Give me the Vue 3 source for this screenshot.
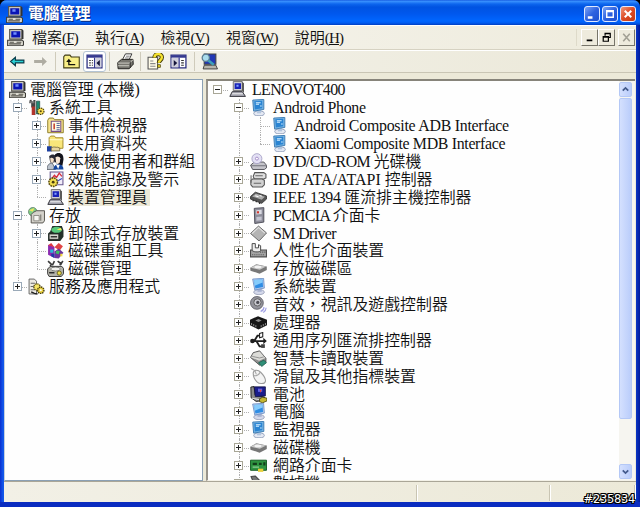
<template>
  <div class="window">
    <!-- Icon sheet -->
    <svg class="sheet" width="0" height="0">
      <symbol id="i-pc" viewBox="0 0 16 16">
        <path d="M2.500 .5h11.500v9H2.500z" fill="#c9c8bf" stroke="#55534c" />
        <path d="M4 2h8.500v6H4z" fill="#0a14b4" />
        <path d="M6 3h3v2.500H6z" fill="#6f8cff" />
        <path d="M14 .5l1.500 1v8L14 9.500z" fill="#333" />
        <path d="M.6 10.500h13.400l1.500 1v3.500l-1 .8H.6z" fill="#dedcd2" stroke="#3b3a36" />
        <path d="M2.500 12.500h4M9 12.500h4.500M2 14h11" stroke="#55534c" />
      </symbol>
      <symbol id="i-dev" viewBox="0 0 16 16">
        <path d="M4 .5h8.500v8.500H4z" fill="#d0d0d4" stroke="#666" stroke-width=".8" />
        <path d="M5.300 2h6v5.500h-6z" fill="#1822b8" />
        <path d="M7 3.500h2v2H7z" fill="#7fa0ff" />
        <path d="M12.500 1l1.500 1v9l-1.500-1.500z" fill="#444" />
        <path d="M3 10h9.500l3 4.500H.8z" fill="#a9a9b4" stroke="#33333a" stroke-width=".9" />
        <path d="M3 12h10" stroke="#eee" />
      </symbol>
      <symbol id="i-tools" viewBox="0 0 16 16">
        <path d="M2 1l2 3v4M6 1v14" stroke="#444" stroke-width="2" fill="none" />
        <path d="M3.500 7h3v8h-3z" fill="#b3342b" />
        <path d="M8 2h3v12H8z" fill="#1c8a72" stroke="#183e38" stroke-width=".6" />
        <path d="M1 3h5" stroke="#777" stroke-width="2" />
        <circle cx="12" cy="11.500" r="3" fill="#ffe254" stroke="#4c4310" stroke-dasharray="1.300 .7" stroke-width="1.200" />
        <circle cx="12" cy="11.500" r="1" fill="#554a13" />
      </symbol>
      <symbol id="i-event" viewBox="0 0 16 16">
        <path d="M.7 3V14.800h14.600V2.500H7L6 1H2z" fill="#f7e48c" stroke="#8a7b28" stroke-width=".9" />
        <path d="M4 4h9v9.500H4z" fill="#fffbe5" stroke="#77508a" />
        <path d="M6 6h1.500v5.500H6z" fill="#c7442f" />
        <path d="M9 6h3M9 8h3M9 10h3M9 12h3" stroke="#4a5a98" stroke-width=".9" />
      </symbol>
      <symbol id="i-share" viewBox="0 0 16 16">
        <path d="M2 12.500V2.500L3.500 1H7l1.200 1.600H15v9.900z" fill="#f9e67a" stroke="#a48c2a" stroke-width=".9" />
        <path d="M2.500 4.500h12" stroke="#fffbd0" />
        <path d="M0 10.500h4.500v5H0z" fill="#1c3fa0" />
        <path d="M4 12c3-1.500 4 0 6-.5l2 .8v2.700H4z" fill="#e8d6a0" stroke="#665a34" stroke-width=".7" />
      </symbol>
      <symbol id="i-users" viewBox="0 0 16 16">
        <path d="M6 7c0-5 2-7 5-7s4.500 2 4.500 6l-1 6-4-1z" fill="#14141c" />
        <path d="M2 3c2-2 5-2 6 0l-1 6H3z" fill="#2a2a34" />
        <path d="M3 5c2-1 3 0 3.500 1L6 9H3.500z" fill="#f2ddc6" />
        <path d="M8 4c2-1.300 4-.5 4.500 1L12 9l-2 1.500L8.500 9z" fill="#f8e6d3" />
        <path d="M0 15.500c0-4 2-6 5-6l3 6z" fill="#bcc3cd" stroke="#353d49" stroke-width=".6" />
        <path d="M6 15.500c0-3 2-5 5-5s4.500 2 4.500 5z" fill="#14469e" />
        <path d="M8.500 11l2 4 1.500-4" fill="#fff" />
      </symbol>
      <symbol id="i-perf" viewBox="0 0 16 16">
        <path d="M3 1h12v12H3z" fill="#f2edf8" stroke="#67578e" />
        <path d="M4 8l3-4 2 2 2.500-4L14 5" stroke="#d52c3c" fill="none" stroke-width="1.200" />
        <path d="M9 10l5-3" stroke="#2f44bc" />
        <circle cx="5.800" cy="10.500" r="4" fill="#f4e052" stroke="#5a4e12" stroke-dasharray="1.600 .8" stroke-width="1.500" />
        <circle cx="5.800" cy="10.500" r="1.300" fill="#463c0c" />
      </symbol>
      <symbol id="i-store" viewBox="0 0 16 16">
        <circle cx="4.500" cy="4.500" r="4" fill="#7fd08a" stroke="#51705a" stroke-width=".7" />
        <path d="M1 3l3.500 1.500L6 1z" fill="#f3e45e" />
        <path d="M5 5l3-1.500h7.500V13l-1.500 2H3V7z" fill="#d4d2cb" stroke="#55534d" stroke-width=".9" />
        <path d="M5.500 8h5v5h-5z" fill="#f7f6f2" stroke="#77756e" stroke-width=".7" />
        <path d="M12 7v6" stroke="#77756e" />
      </symbol>
      <symbol id="i-remov" viewBox="0 0 16 16">
        <path d="M3 6l2-5h9l1.500 4v6l-3 4H1V8z" fill="#23302a" />
        <ellipse cx="9" cy="4.500" rx="5" ry="2.800" fill="#58c87b" />
        <path d="M9 4.500l4-2 .8 2.500z" fill="#f6ea5c" />
        <path d="M2 8.500h9v5H2z" fill="#d5d5cf" stroke="#222" stroke-width=".7" />
        <path d="M3.500 11h6" stroke="#333" stroke-width="1.400" />
      </symbol>
      <symbol id="i-defrag" viewBox="0 0 16 16">
        <path d="M1 2.500l6 2v10.500l-6-3z" fill="#8a2bb0" />
        <path d="M1 3l3-2 3 4z" fill="#dd3742" />
        <path d="M3 7h3v3H3z" fill="#28b9d8" />
        <path d="M7 5l4-4 4 3-3 4z" fill="#e04444" />
        <path d="M7 9l4-3 4.500 4-4.500 5.500-4-.5z" fill="#6b34a0" />
        <path d="M9 8l3 .5-1 3-3-1z" fill="#3cc261" />
        <path d="M12.500 11h2v2.500h-2z" fill="#f3d93d" />
        <path d="M4 11h3v4L4 13.500z" fill="#1d3aa6" />
      </symbol>
      <symbol id="i-dmgmt" viewBox="0 0 16 16">
        <path d="M1 1l3 3-1 2M7 1L5 5M10 1l4 3M15 1l-3 4" stroke="#3a3a3a" stroke-width="1.500" fill="none" />
        <path d="M3 6h11l1.500 2v5l-2 2.500H2L.6 13V8.500z" fill="#b5b4ab" stroke="#333" stroke-width=".9" />
        <ellipse cx="8" cy="8.500" rx="4.500" ry="1.800" fill="#f2f2ee" stroke="#555" stroke-width=".6" />
        <path d="M2 12h5" stroke="#222" stroke-width="1.300" />
        <circle cx="11.500" cy="12.300" r="2" fill="#ebdc4a" stroke="#5a5210" stroke-width=".8" />
      </symbol>
      <symbol id="i-serv" viewBox="0 0 16 16">
        <path d="M1 1h5l2 2v12H1z" fill="#eceae2" stroke="#666" stroke-width=".9" />
        <path d="M2.500 5h4M2.500 8h4M2.500 11h4" stroke="#666" />
        <circle cx="8.500" cy="8.500" r="3" fill="#f6e564" stroke="#5d5116" stroke-dasharray="1.300 .7" stroke-width="1.300" />
        <circle cx="12" cy="11.500" r="3" fill="#e8cf3c" stroke="#463c0c" stroke-dasharray="1.300 .7" stroke-width="1.300" />
        <circle cx="12" cy="11.500" r="1" fill="#fff" />
        <path d="M3 13l3 1.500 3 .5" stroke="#222" stroke-width="1.400" fill="none" />
      </symbol>

      <symbol id="i-mon" viewBox="0 0 16 16">
        <ellipse cx="8.500" cy="13.300" rx="5" ry="2.400" fill="#d4d8ea" stroke="#9aa0b8" stroke-width=".8" />
        <path d="M7 9h4v4H7z" fill="#a8b2d0" />
        <path d="M2.500 1L12.800.3l.7 9.200-9 1.800z" fill="#b8cdee" stroke="#6d8fc4" stroke-width=".8" />
        <path d="M3.700 2l8-.6.6 7-7.200 1.400z" fill="#2f8de4" />
        <path d="M3.700 2l8-.6.2 2.800-7.500 3z" fill="#86ccfb" />
      </symbol>
      <symbol id="i-scr" viewBox="0 0 16 16">
        <ellipse cx="8.500" cy="13.600" rx="5" ry="2.200" fill="#e6eaf4" stroke="#94a2bc" stroke-width=".9" />
        <path d="M6.500 10h4v3.500h-4z" fill="#b4c6de" />
        <path d="M2.600 1L13 .4v9.400l-9.600 1.600z" fill="#78b5e4" stroke="#3e7cb2" stroke-width=".9" />
        <path d="M4 2l7.500-.4v7L4.500 9.800z" fill="#2a84d2" />
        <path d="M5.500 3.500h4.500M5.500 5h3M9.500 6.500h1.500" stroke="#d8f0ff" />
      </symbol>
      <symbol id="i-dvd" viewBox="0 0 16 16">
        <path d="M.5 11.500L4 8.500h9l2.500 3v2.500l-2 1.500H2.500z" fill="#c4c4ca" stroke="#55555c" stroke-width=".9" />
        <path d="M1 12h14" stroke="#66666d" stroke-width=".8" />
        <circle cx="6.500" cy="5.300" r="4.700" fill="#e3e0f4" stroke="#a39ec4" stroke-width=".8" />
        <circle cx="6.500" cy="5.300" r="1.400" fill="#fff" stroke="#9a80c0" stroke-width=".8" />
      </symbol>
      <symbol id="i-ide" viewBox="0 0 16 16">
        <path d="M4.500 1.500h8.500l2 1.500v3.500l-2 1H4L3 5z" fill="#dedede" stroke="#555" />
        <path d="M2.500 7.500h9l2 1.200V13l-2 2H2.500L.8 13V9z" fill="#d2d2d2" stroke="#555" />
        <path d="M3.500 11.500h7M5 4.500h7" stroke="#666" />
        <path d="M1 4v7" stroke="#666" />
      </symbol>
      <symbol id="i-1394" viewBox="0 0 16 16">
        <path d="M.5 7L5 3l10.500 3.500v3L11 13.500.5 9.500z" fill="#555" stroke="#333" stroke-width=".8" />
        <path d="M2 7l3.500-2.800 8.500 3-3 2.800z" fill="#adadad" />
        <path d="M5 6.300l3 1M9 6l2 .8" stroke="#fff" />
        <path d="M3 10v1.500M6 11v1.500M9 12v2" stroke="#333" stroke-width="1.200" />
      </symbol>
      <symbol id="i-pcmcia" viewBox="0 0 16 16">
        <path d="M4 1.300L13 .6v13.600L4.500 15.500z" fill="#8d8d9a" stroke="#4d4d58" stroke-width=".9" />
        <path d="M5.800 3l5.200-.5v4L6 7z" fill="#dadae2" />
        <path d="M6.500 4h2v2h-2z" fill="#d3392f" />
        <path d="M6 9.500l5-.5v3.500L6 13z" fill="#c3c3cf" />
      </symbol>
      <symbol id="i-diamond" viewBox="0 0 16 16">
        <path d="M.5 8L8 1l7.600 6.500L8.500 15z" fill="#b4b4b4" stroke="#666" stroke-width=".9" />
        <path d="M2 8l6-5.700 6 5.300" stroke="#e3e3e3" fill="none" />
      </symbol>
      <symbol id="i-hid" viewBox="0 0 16 16">
        <path d="M.5 7.500h15v6.500H.5z" fill="#a3a3a3" stroke="#4c4c4c" />
        <path d="M2 1.500h3v4h3V2.500l2 1v4.500c0 1.500-6 2-8 0z" fill="#ededed" stroke="#444" stroke-width=".9" />
        <path d="M9.500 9.500h5M2 12h12" stroke="#555" stroke-dasharray="1 1" />
      </symbol>
      <symbol id="i-disk" viewBox="0 0 16 16">
        <path d="M.2 7.300L6 4l9.800 2v3.500L9 13 .4 10z" fill="#777" />
        <path d="M.6 7.200L6 4.400l9.200 1.800-6 3z" fill="#c8c8c8" />
        <ellipse cx="7.500" cy="6.500" rx="3.300" ry="1.200" fill="#f3f3f3" />
      </symbol>
      <symbol id="i-snd" viewBox="0 0 16 16">
        <ellipse cx="6.500" cy="6.500" rx="6" ry="6" fill="#93939b" stroke="#5a5a62" stroke-width=".8" />
        <circle cx="7" cy="6" r="3.400" fill="#c9c9d0" stroke="#555" stroke-width=".8" />
        <circle cx="7.300" cy="6" r="1.500" fill="#4c4c54" />
        <path d="M10 14.500c2-.5 3-2 3.200-4M12.500 15.500c1.500-.8 2.500-2.500 2.700-4.500" stroke="#a0a0e4" fill="none" stroke-width="1.100" />
      </symbol>
      <symbol id="i-cpu" viewBox="0 0 16 16">
        <path d="M0 5.500L7.500 2 16 5.500v5L8 14.500 0 10.500z" fill="#161616" />
        <path d="M5 6l3-1.300 3 1.300-3 1.500z" fill="#8a8a8a" />
        <path d="M1.500 8.500v2M3.500 9.500v2M5.500 10.500v2M10.500 10.500v2M12.500 9.500v2M14.500 8.500v2" stroke="#b5b5b5" stroke-width=".7" />
      </symbol>
      <symbol id="i-usb" viewBox="0 0 16 16">
        <path d="M1 8.500h13M4 8.500l3-5h3M6 8.500l3 5h3" stroke="#1d1d1d" stroke-width="1.700" fill="none" />
        <circle cx="2.300" cy="8.500" r="2.200" fill="#1d1d1d" />
        <path d="M9 1.500l3-1v4L9 5.500z" fill="#fff" stroke="#1d1d1d" />
        <path d="M10.500 11.500h3.500v3.500h-3.500z" fill="#444" />
        <path d="M12.500 5.500l3.300 3-3.300 3z" fill="#1d1d1d" />
      </symbol>
      <symbol id="i-card" viewBox="0 0 16 16">
        <path d="M.5 7L3 2.500 9 .8l6 7v3.500l-6 3z" fill="#8f8f8f" stroke="#4c4c4c" stroke-width=".8" />
        <path d="M1 7l2.300-4L9 1.500l5.500 6-6 2.500z" fill="#dcdcd8" />
        <path d="M2 6l7 1.500 4-1" stroke="#888" fill="none" stroke-width=".8" />
        <path d="M8 12l5-2.500 2.500 2.500-4.500 3.500z" fill="#2f8f78" stroke="#1b5548" stroke-width=".7" />
      </symbol>
      <symbol id="i-mouse" viewBox="0 0 16 16">
        <path d="M3 5C3 2 7 1 10 4c3 3 5 6 4.500 8.500C14 15 9 15.500 6.500 13 4.500 11 3 8 3 5z" fill="#f4f4f4" stroke="#9b9b9b" />
        <path d="M3.500 7c2 1 5-.5 6-3M6 6L4.500 2.500 1 .5" stroke="#a8a8a8" fill="none" />
      </symbol>
      <symbol id="i-batt" viewBox="0 0 16 16">
        <path d="M.8 1l3-.5 1 8 9 2v3l-8 1L1 11z" fill="#8a8a8a" stroke="#222" stroke-width=".9" />
        <path d="M4 .8h10.500v8.500L5 10z" fill="#1a1c8c" stroke="#11123c" stroke-width=".7" />
        <path d="M7.500 2.500h4v3h-4z" fill="#5d63e8" />
        <path d="M9 3.500h2l-1 3z" fill="#e3443c" />
        <path d="M2 11.500l7 1.500" stroke="#ddd" />
        <path d="M9 12l3-1.500 4 1v2.500l-4 1.800-3-1z" fill="#c4b732" stroke="#38340b" stroke-width=".7" />
      </symbol>
      <symbol id="i-nic" viewBox="0 0 16 16">
        <path d="M.5 3h15v9.500H.5z" fill="#2e9440" stroke="#145a22" stroke-width=".9" />
        <path d="M2.500 5.500h4v2h-4zM8.500 5.500h2.500v2H8.500zM12.500 5h2v3h-2z" fill="#123e1a" />
        <path d="M2.500 9.500h6" stroke="#9ad8a2" />
        <path d="M7.500 11h5v3h-5z" fill="#e7cf3a" />
      </symbol>
      <symbol id="i-modem" viewBox="0 0 16 16">
        <path d="M1 1.500l4-.5 6 6v4H5z" fill="#777" stroke="#444" />
      </symbol>

      <symbol id="i-back" viewBox="0 0 16 16">
        <path d="M1.500 8l4.500-3.900v2.600h8v2.600H6v2.600z" fill="#2cd3d6" stroke="#0b3c4a" stroke-width="1.100" />
      </symbol>
      <symbol id="i-fwd" viewBox="0 0 16 16">
        <path d="M14 8L9.500 3.800v2.900H2v2.600h7.500v2.900z" fill="#aeaca2" />
      </symbol>
      <symbol id="i-up" viewBox="0 0 16 16">
        <path d="M.7 14V3.500L2 2h4.500l1.300 1.700h7.500V14z" fill="#f8ee86" stroke="#3e3a12" />
        <path d="M5.500 11.500V7.500M5 11h6.500" stroke="#14140c" stroke-width="1.200" />
        <path d="M3 8.500l2.500-3 2.500 3z" fill="#14140c" />
      </symbol>
      <symbol id="i-panel" viewBox="0 0 16 16">
        <path d="M1 2h14v12H1z" fill="#fff" stroke="#2b2f80" stroke-width="1.200" />
        <path d="M1 2h14v2.500H1z" fill="#34388f" />
        <path d="M7.500 4.500h1.200v9.500H7.500z" fill="#34388f" />
        <path d="M8.700 4.500H14.500v9H8.700z" fill="#d0d0dc" />
        <path d="M3 7h1.500M3 9.300h1.500M3 11.600h1.500M5.500 7h1M5.500 9.300h1M5.500 11.600h1" stroke="#333" />
        <path d="M13 6.500v6L9.800 9.500z" fill="#15153a" />
      </symbol>
      <symbol id="i-panel2" viewBox="0 0 16 16">
        <path d="M1 2h14v12H1z" fill="#fff" stroke="#2b2f80" stroke-width="1.200" />
        <path d="M1 2h14v2.500H1z" fill="#34388f" />
        <path d="M1.500 4.500h6.500v9H1.500z" fill="#d0d0dc" />
        <path d="M8 4.500h1.200v9.500H8z" fill="#34388f" />
        <path d="M3.500 6.500v6L6.800 9.500z" fill="#15153a" />
        <path d="M10.500 7H13M10.500 9.300H13M10.500 11.600H13" stroke="#333" />
      </symbol>
      <symbol id="i-print" viewBox="0 0 16 16">
        <path d="M5 6.500L8 .8h6L11.500 6z" fill="#fff" stroke="#333" stroke-width=".9" />
        <path d="M8.500 3h3.500M7.500 4.700H11" stroke="#555" stroke-width=".7" />
        <path d="M.7 9l3.500-3H15l.3 4.500-3.800 4.300H1z" fill="#77766f" stroke="#23221f" stroke-width=".9" />
        <path d="M1 9.500h10.500L15 6.500M1 12h10.500" stroke="#dddcd3" stroke-width=".8" fill="none" />
        <path d="M12.500 8v6" stroke="#23221f" stroke-width=".7" />
      </symbol>
      <symbol id="i-help" viewBox="0 0 16 16">
        <path d="M1 4h9v11H1z" fill="#fffbe8" stroke="#555" />
        <path d="M3 7.500h3M3 10h5M3 12.500h5" stroke="#888" />
        <path d="M7 4.500c0-4.500 7-4.500 7-.5 0 2.800-2.800 2.600-2.800 5.500" stroke="#443c06" stroke-width="4" fill="none" />
        <path d="M7 4.300c0-4.300 7-4.300 7-.3 0 2.800-2.800 2.600-2.800 5.200" stroke="#f5e230" stroke-width="2.300" fill="none" />
        <path d="M10 11h2.600v2.500H10z" fill="#f5e230" stroke="#443c06" stroke-width=".7" />
      </symbol>
      <symbol id="i-scan" viewBox="0 0 16 16">
        <path d="M3 1h11v9.500H3z" fill="#2238b4" stroke="#444" />
        <path d="M3 11.500h11l1.500 3.500H2z" fill="#b7b5ac" stroke="#333" stroke-width=".8" />
        <circle cx="4.500" cy="4.500" r="3.400" fill="#a9dced" stroke="#5c7d92" stroke-width="1.200" />
        <path d="M7 7l5 4" stroke="#3ea0b8" stroke-width="2.400" />
      </symbol>
    </svg>

    <header class="titlebar">
      <svg class="app-icon"><use href="#i-pc" /></svg>
      <h1>電腦管理</h1>
      <div class="caption-buttons">
        <button class="cap"><svg viewBox="0 0 15 15"><path d="M3 10h5v2.500H3z" fill="#fff" /></svg></button>
        <button class="cap"><svg viewBox="0 0 15 15"><path d="M4 4h7v7H4zM4 5h7" fill="none" stroke="#fff" stroke-width="1.500" /></svg></button>
        <button class="cap close"><svg viewBox="0 0 15 15"><path d="M4 4l7 7M11 4l-7 7" stroke="#fff" stroke-width="2.200" /></svg></button>
      </div>
    </header>

    <nav class="menubar">
      <svg class="app-icon"><use href="#i-pc" /></svg>
      <a v-for="m in menus" :key="m.key" class="menu">{{ m.name }}<span class="key">(<u>{{ m.key }}</u>)</span></a>
      <div class="mdi-buttons">
        <button class="mdi"><svg viewBox="0 0 16 14"><path d="M5 9h6v2H5z" fill="#000" /></svg></button>
        <button class="mdi"><svg viewBox="0 0 16 14"><path d="M6.500 5V2.500H12V7h-2M4.500 6H10v5H4.500zM4.500 6.500H10M6.500 3H12" fill="none" stroke="#000" stroke-width="1.300" /></svg></button>
        <button class="mdi off"><svg viewBox="0 0 16 14"><path d="M4.500 3l7 8M11.500 3l-7 8" stroke="#a3a195" stroke-width="1.700" /></svg></button>
      </div>
    </nav>

    <div class="toolbar">
      <template v-for="(t, i) in tools" :key="i">
        <span v-if="t === '|'" class="sep"></span>
        <button v-else :class="['tool', { active: t === 'panel' }]"><svg><use :href="'#i-' + t" /></svg></button>
      </template>
    </div>

    <main class="panes">
      <section v-for="p in panes" :key="p.id" :class="['pane', p.id]">
        <div class="tree">
          <div v-for="row in p.rows" :key="row.icon + row.latin + row.text" class="row">
            <span v-for="(c, i) in row.cells" :key="i" :class="['cell', kinds[c]]">
              <i v-if="boxes[c]" class="box">
                <svg viewBox="0 0 9 9"><path :d="boxes[c] === '-' ? 'M2 4.5h5' : 'M2 4.5h5M4.5 2v5'" stroke="#222" /></svg>
              </i>
            </span>
            <svg class="icon"><use :href="'#i-' + row.icon" /></svg>
            <span :class="['label', { selected: row.selected }]"><span v-if="row.latin" :style="{ letterSpacing: row.tracking + 'px' }">{{ row.latin }}</span>{{ row.text }}</span>
          </div>
        </div>
        <div v-if="p.id === 'right'" class="scrollbar">
          <button class="arrow"><svg viewBox="0 0 14 14"><path d="M3.500 8.500L7 5l3.500 3.500" fill="none" stroke="#435a8c" stroke-width="2.200" /></svg></button>
          <div class="thumb"></div>
          <button class="arrow down"><svg viewBox="0 0 14 14"><path d="M3.500 5.500L7 9l3.500-3.500" fill="none" stroke="#435a8c" stroke-width="2.200" /></svg></button>
        </div>
      </section>
    </main>

    <footer class="statusbar">
      <span class="field grow"></span>
      <span class="field mid"></span>
      <span class="field last"></span>
    </footer>
    <span class="stamp">#235834</span>
  </div>
</template>

<script setup>
const menus = [
  { name: '檔案', key: 'F' },
  { name: '執行', key: 'A' },
  { name: '檢視', key: 'V' },
  { name: '視窗', key: 'W' },
  { name: '說明', key: 'H' },
]

const tools = ['back', 'fwd', '|', 'up', 'panel', '|', 'print', '|', 'help', 'panel2', '|', 'scan']

// Cell codes: v = line, t = tee, l = elbow, + / - = tee with a box,
// P = elbow with a plus, r = root box, _ = empty
const kinds = { v: 'line', t: 'line tee', l: 'elbow tee', '+': 'line tee', '-': 'line tee', P: 'elbow tee', r: 'tee', _: '' }
const boxes = { '+': '+', '-': '-', P: '+', r: '-' }

const row = (cells, icon, text, selected = false) => ({ cells: [...cells], icon, latin: '', text, selected })
// Latin part first, with its own tracking
const mixed = (cells, icon, latin, tracking, text = '') => ({ cells: [...cells], icon, latin, tracking, text })

const panes = [
  {
    id: 'left',
    rows: [
      row('', 'pc', '電腦管理 (本機)'),
      row('-', 'tools', '系統工具'),
      row('v+', 'event', '事件檢視器'),
      row('v+', 'share', '共用資料夾'),
      row('v+', 'users', '本機使用者和群組'),
      row('v+', 'perf', '效能記錄及警示'),
      row('vl', 'dev', '裝置管理員', true),
      row('-', 'store', '存放'),
      row('v+', 'remov', '卸除式存放裝置'),
      row('vt', 'defrag', '磁碟重組工具'),
      row('vl', 'dmgmt', '磁碟管理'),
      row('P', 'serv', '服務及應用程式'),
    ],
  },
  {
    id: 'right',
    rows: [
      mixed('r', 'dev', 'LENOVOT400', -0.6),
      mixed('_-', 'scr', 'Android Phone', -0.3),
      mixed('_vt', 'scr', 'Android Composite ADB Interface', -0.26),
      mixed('_vl', 'scr', 'Xiaomi Composite MDB Interface', -0.33),
      mixed('_+', 'dvd', 'DVD/CD-ROM ', -0.52, '光碟機'),
      mixed('_+', 'ide', 'IDE ATA/ATAPI ', 0.03, '控制器'),
      mixed('_+', '1394', 'IEEE 1394 ', -0.28, '匯流排主機控制器'),
      mixed('_+', 'pcmcia', 'PCMCIA ', -0.6, '介面卡'),
      mixed('_+', 'diamond', 'SM Driver', -0.6),
      row('_+', 'hid', '人性化介面裝置'),
      row('_+', 'disk', '存放磁碟區'),
      row('_+', 'mon', '系統裝置'),
      row('_+', 'snd', '音效，視訊及遊戲控制器'),
      row('_+', 'cpu', '處理器'),
      row('_+', 'usb', '通用序列匯流排控制器'),
      row('_+', 'card', '智慧卡讀取裝置'),
      row('_+', 'mouse', '滑鼠及其他指標裝置'),
      row('_+', 'batt', '電池'),
      row('_+', 'mon', '電腦'),
      row('_+', 'scr', '監視器'),
      row('_+', 'disk', '磁碟機'),
      row('_+', 'nic', '網路介面卡'),
      row('_+', 'modem', '數據機'),
    ],
  },
]
</script>

<style>
body {
  background: #000;
}
</style>

<style scoped>
.window {
  position: relative;
  box-sizing: border-box;
  width: 640px;
  height: 507px;
  display: flex;
  flex-direction: column;
  padding: 0 4px 5px;
  overflow: hidden;
  border-radius: 7px 7px 0 0;
  background: linear-gradient(90deg, #0a2fd0 0, #1257ea 3px, #1257ea 4px, #0b36c4 636px, #001a9c 640px);
  box-shadow: inset 0 -5px 0 #0a2cc0;
  font-family: "Liberation Serif", "Noto Sans CJK TC", serif;
  font-size: 15.900px;
  font-weight: 350;
  color: #111;
}

.sheet {
  position: absolute;
}

button {
  padding: 0;
  margin: 0;
  border: none;
  background: none;
}

button svg {
  display: block;
  width: 100%;
  height: 100%;
}

.titlebar {
  flex: none;
  height: 25px;
  margin: 0 -4px;
  padding: 3px 4px 0 6px;
  box-sizing: border-box;
  display: flex;
  align-items: center;
  background: linear-gradient(180deg, #0a4ad8 0, #3d95ff 1px, #0d66ee 4px, #0053e1 7px, #0058ee 14px, #0066ff 21px, #005bf0 23px, #003dc0 25px);
}

.app-icon {
  flex: none;
  width: 17px;
  height: 17px;
}

.titlebar h1 {
  margin: 0 0 0 5px;
  font-size: 15.700px;
  line-height: 20px;
  font-weight: 700;
  color: #fff;
  text-shadow: 1px 1px 0 #0a2a80;
}

.caption-buttons {
  display: flex;
  gap: 2px;
  margin-left: auto;
}

.cap {
  box-sizing: border-box;
  width: 16px;
  height: 16px;
  border: 1px solid #dfe9ff;
  border-radius: 3px;
  background: linear-gradient(135deg, #7ba4f6, #2e62e0 50%, #1d4fd0);
}

.cap.close {
  background: linear-gradient(135deg, #f0987c, #dc4a24 50%, #c33a14);
}

.menubar {
  flex: none;
  height: 25px;
  box-sizing: border-box;
  display: flex;
  align-items: center;
  padding: 0 1px 0 3px;
  background: linear-gradient(90deg, #f7f6f1, #eeebdc);
  border-top: 1px solid #fff;
  border-bottom: 1px solid #d6d2c2;
}

.menu {
  margin-left: 8px;
  margin-right: 9px;
  line-height: 22px;
  font-size: 15px;
  white-space: nowrap;
}

.key {
  letter-spacing: -0.8px;
}

.mdi-buttons {
  display: flex;
  margin-left: auto;
  padding-left: 4px;
  border-left: 1px solid #dedac9;
}

.mdi {
  box-sizing: border-box;
  width: 17px;
  height: 17px;
  background: #eeebdd;
  border: 1px solid #fff;
  border-right-color: #77756a;
  border-bottom-color: #77756a;
}

.mdi.off {
  margin-left: 3px;
}

.toolbar {
  flex: none;
  height: 23px;
  box-sizing: border-box;
  display: flex;
  align-items: center;
  padding: 0 2px;
  background: linear-gradient(90deg, #f5f4ee, #ebe8d8);
  border-top: 1px solid #fff;
  border-bottom: 1px solid #c9c5b4;
}

.tool {
  box-sizing: border-box;
  width: 23px;
  height: 21px;
  padding: 2px 3px;
}

.tool.active {
  border: 1px solid #b4c4d4;
  border-radius: 3px;
  background: #fff;
  padding: 1px 2px;
}

.sep {
  width: 1px;
  height: 19px;
  margin: 0 3.400px;
  background: #cfcbbb;
}

.panes {
  flex: 1;
  min-height: 0;
  display: grid;
  grid-template-columns: 199px 1fr;
  gap: 3px;
  padding: 6px 1px 0 0;
  background: #ece9d8;
}

.pane {
  box-sizing: border-box;
  min-width: 0;
  min-height: 0;
  display: flex;
  overflow: hidden;
  background: #fefefe;
}

.pane.left {
  border: 1px solid #8ba0b4;
  border-left-color: #c4d0dc;
  padding-left: 3px;
}

.pane.right {
  border-top: 2px solid #87847a;
  border-left: 2px solid #97938a;
  border-bottom: 1px solid #f4f2e8;
}

.tree {
  flex: 1;
  min-width: 0;
  --step: 19px;
  --gap: 4px;
}

.pane.left .tree {
  padding-top: 1px;
}

.pane.right .tree {
  --step: 21px;
  --gap: 6px;
  margin-left: -1px;
}

.row {
  display: flex;
  align-items: center;
  height: 17.900px;
}

.cell {
  position: relative;
  flex: none;
  width: var(--step);
  height: 100%;
  display: flex;
  align-items: center;
  justify-content: center;
}

.cell.line::before,
.cell.elbow::before {
  content: "";
  position: absolute;
  left: 50%;
  top: 0;
  bottom: 0;
  border-left: 1px dotted #b0b0b0;
}

.cell.elbow::before {
  bottom: 50%;
}

.cell.tee::after {
  content: "";
  position: absolute;
  left: 50%;
  right: 0;
  top: 50%;
  border-top: 1px dotted #b0b0b0;
}

.box {
  position: relative;
  z-index: 1;
  box-sizing: border-box;
  display: block;
  width: 9px;
  height: 9px;
  border: 1px solid #9aa9b8;
  background: #fff;
}

.pane.right .box {
  border-color: #a8a696;
}

.box svg {
  display: block;
  width: 9px;
  height: 9px;
  margin: -1px;
}

.icon {
  flex: none;
  width: 17px;
  height: 17px;
  margin: 0 var(--gap) 0 1px;
}

.label {
  line-height: 17px;
  white-space: pre;
}

.label.selected {
  background: #ece9d8;
  padding-right: 3px;
}

.scrollbar {
  flex: none;
  width: 13px;
  display: flex;
  flex-direction: column;
  padding: 1px 3px 1px 0;
  background: #f6f5f0;
}

.arrow,
.thumb {
  box-sizing: border-box;
  border: 1px solid #b4c8f6;
  border-radius: 2px;
  background: linear-gradient(90deg, #d4e0fe, #bacdfb);
}

.arrow {
  flex: none;
  height: 15px;
}

.thumb {
  height: 321px;
  margin-top: 1px;
}

.arrow.down {
  margin-top: auto;
}

.statusbar {
  flex: none;
  height: 21px;
  display: flex;
  align-items: stretch;
  box-sizing: border-box;
  padding: 3px 1px 1px 0;
  border-top: 1px solid #aaa697;
  background: linear-gradient(90deg, #f2f0e6, #ece9d8);
}

.field {
  border-right: 1px solid #c9c5b3;
  box-shadow: 1px 0 0 #fff;
}

.field.grow {
  flex: 1;
}

.field.mid {
  width: 132px;
}

.field.last {
  width: 84px;
}

.stamp {
  position: absolute;
  right: 5px;
  bottom: 1px;
  font: 11.500px/14px "DejaVu Sans", sans-serif;
  letter-spacing: -0.3px;
  color: #fff;
  text-shadow: 1px 0 #000, -1px 0 #000, 0 1px #000, 0 -1px #000, 1px 1px #000, -1px -1px #000, 1px -1px #000, -1px 1px #000;
}
</style>
